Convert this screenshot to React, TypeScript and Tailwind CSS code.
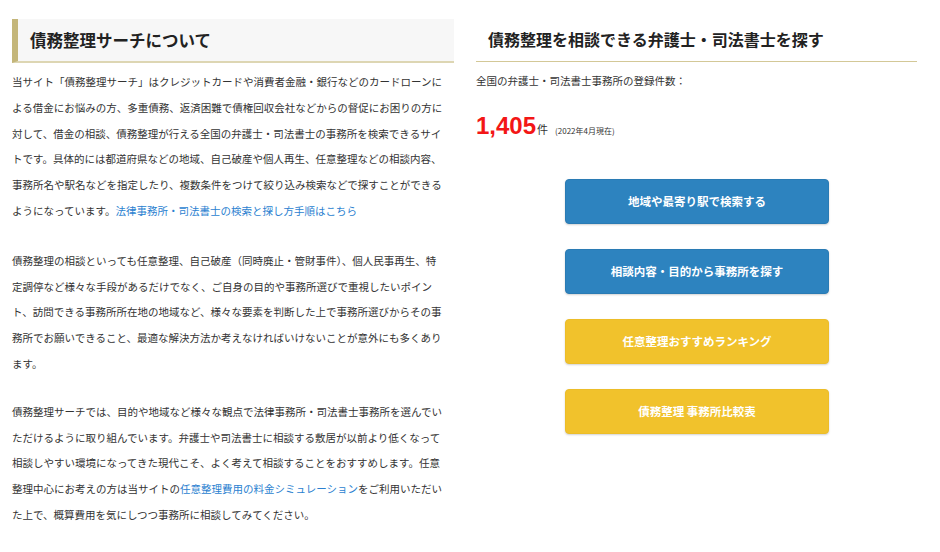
import React from "react";

const jp = "font-['Noto_Sans_CJK_JP','Noto_Sans',sans-serif]";

function Btn({ label, color }: { label: string; color: "blue" | "yellow" }) {
  const cls =
    color === "blue"
      ? "bg-[#2d83bf] border-[#2a7bb4]"
      : "bg-[#f1c22c] border-[#ecbd28]";
  return (
    <a
      className={`flex h-[45px] w-[264px] items-center justify-center rounded-[4px] border text-[11.5px] font-bold text-white shadow-[0_1px_2px_rgba(0,0,0,0.18)] ${cls}`}
    >
      {label}
    </a>
  );
}

export default function App() {
  return (
    <div className={`flex w-[940px] h-[552px] bg-white pl-[12px] pt-[19px] text-[#333] ${jp}`}>
      <div className="w-[442px] shrink-0">
        <h2 className="flex h-[44px] items-center border-l-[6px] border-b-2 border-l-[#c4b67a] border-b-[#ddd6b3] bg-[#f7f7f7] pl-[12px] text-[16.5px] font-bold text-[#222]">
          債務整理サーチについて
        </h2>
        <div className="mt-[6px] text-[10.5px] leading-[25.8px] whitespace-nowrap">
          <p>
            当サイト「債務整理サーチ」はクレジットカードや消費者金融・銀行などのカードローンに<br />
            よる借金にお悩みの方、多重債務、返済困難で債権回収会社などからの督促にお困りの方に<br />
            対して、借金の相談、債務整理が行える全国の弁護士・司法書士の事務所を検索できるサイ<br />
            トです。具体的には都道府県などの地域、自己破産や個人再生、任意整理などの相談内容、<br />
            事務所名や駅名などを指定したり、複数条件をつけて絞り込み検索などで探すことができる<br />
            ようになっています。<a className="text-[#2b7fd0]">法律事務所・司法書士の検索と探し方手順はこちら</a>
          </p>
          <p className="mt-[24px]">
            債務整理の相談といっても任意整理、自己破産（同時廃止・管財事件）、個人民事再生、特<br />
            定調停など様々な手段があるだけでなく、ご自身の目的や事務所選びで重視したいポイン<br />
            ト、訪問できる事務所所在地の地域など、様々な要素を判断した上で事務所選びからその事<br />
            務所でお願いできること、最適な解決方法か考えなければいけないことが意外にも多くあり<br />
            ます。
          </p>
          <p className="mt-[22px]">
            債務整理サーチでは、目的や地域など様々な観点で法律事務所・司法書士事務所を選んでい<br />
            ただけるように取り組んでいます。弁護士や司法書士に相談する敷居が以前より低くなって<br />
            相談しやすい環境になってきた現代こそ、よく考えて相談することをおすすめします。任意<br />
            整理中心にお考えの方は当サイトの<a className="text-[#2b7fd0]">任意整理費用の料金シミュレーション</a>をご利用いただい<br />
            た上で、概算費用を気にしつつ事務所に相談してみてください。
          </p>
        </div>
      </div>
      <div className="ml-[22px] w-[441px] shrink-0">
        <h2 className="h-[43px] border-b border-[#d3c897] pl-[12px] pt-[8px] text-[16px] font-bold leading-[24px] text-[#222]">
          債務整理を相談できる弁護士・司法書士を探す
        </h2>
        <p className="mt-[10px] text-[10.5px] leading-[18px]">全国の弁護士・司法書士事務所の登録件数：</p>
        <p className="mt-[21px] flex items-baseline leading-[30px]">
          <span className="font-['Liberation_Sans',Arial,sans-serif] text-[24px] font-bold text-[#f31616]">1,405</span>
          <span className="ml-[1px] text-[11px]">件</span>
          <span className="ml-[7px] text-[8px]">(2022年4月現在)</span>
        </p>
        <div className="mt-[33px] flex flex-col items-center gap-[25px] pl-[1px]">
          <Btn label="地域や最寄り駅で検索する" color="blue" />
          <Btn label="相談内容・目的から事務所を探す" color="blue" />
          <Btn label="任意整理おすすめランキング" color="yellow" />
          <Btn label="債務整理 事務所比較表" color="yellow" />
        </div>
      </div>
    </div>
  );
}
